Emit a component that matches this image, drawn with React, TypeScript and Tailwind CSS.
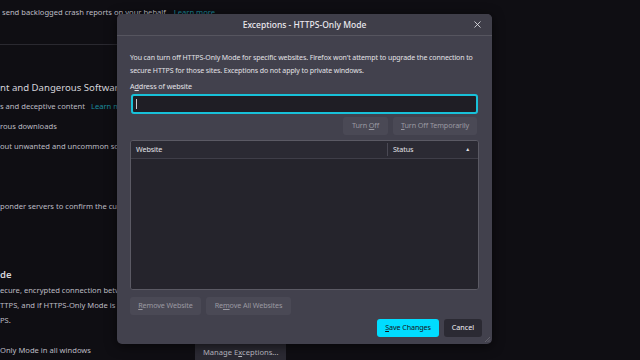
import { X } from "lucide-react";

const font = { fontFamily: '"Noto Sans", "Open Sans", sans-serif' };

function BackgroundPage() {
    return (
        <div className="w-[640px] h-[360px] bg-[#0f0e13] text-[#bdbcc3] text-[7.6px] overflow-hidden relative" style={font}>
            <div className="pt-[4px] pl-[2px] leading-[16px] whitespace-nowrap">
                send backlogged crash reports on your behalf. <span className="text-[#1b8a9c] ml-1">Learn more</span>
            </div>
            <div className="mt-[24px] border-t border-[#2a2930] w-[130px]" />
            {/* the rest of the page sits behind the dialog, so clip it at its left edge */}
            <div className="w-[117px] overflow-hidden">
                <div className="mt-[35px] text-[9.6px] leading-[16px] text-[#d4d3d9] whitespace-nowrap">nt and Dangerous Software</div>
                <div className="leading-[20px] whitespace-nowrap">
                    s and deceptive content <span className="text-[#1b8a9c] ml-1">Learn more</span>
                </div>
                <div className="leading-[20px] whitespace-nowrap">rous downloads</div>
                <div className="leading-[20px] whitespace-nowrap">out unwanted and uncommon software</div>
                <div className="mt-[40px] leading-[20px] whitespace-nowrap">ponder servers to confirm the current validity of certificates</div>
                <div className="mt-[51px] text-[9.5px] leading-[16px] font-semibold text-[#d4d3d9] whitespace-nowrap">de</div>
                <div className="whitespace-nowrap leading-[15px]">ecure, encrypted connection between Firefox and the websites</div>
                <div className="whitespace-nowrap leading-[15px]">TTPS, and if HTTPS-Only Mode is on</div>
                <div className="whitespace-nowrap leading-[15px]">PS.</div>
            </div>
            <div className="mt-[15px] flex items-start whitespace-nowrap">
                <span className="leading-[14px]">Only Mode in all windows</span>
                <span className="ml-[104px] px-[8px] h-[20px] flex items-center bg-[#2b2a33] text-[#bdbcc3]">
                    <span>Manage E<u>x</u>ceptions...</span>
                </span>
            </div>
        </div>
    );
}

function GhostButton({ children, className = "" }: { children: React.ReactNode; className?: string }) {
    return (
        <div className={`h-[18px] rounded-[3px] bg-[#4a4955] text-[#9a99a2] flex items-center justify-center whitespace-nowrap text-[7.2px] tracking-[-0.1px] ${className}`}>
            <span>{children}</span>
        </div>
    );
}

function ExceptionsDialog() {
    return (
        <div className="absolute left-[117px] top-[14px] w-[375px] h-[330px] rounded-[5px] bg-[#42414d] shadow-[0_2px_12px_rgba(0,0,0,0.6)] flex flex-col text-[#ebeaef]" style={font}>
            <div className="h-[22px] flex items-center justify-center relative border-b border-[#56555f] bg-[#3f3e49] rounded-t-[5px]">
                <span className="text-[8.5px] font-medium mt-[1px]">Exceptions - HTTPS-Only Mode</span>
                <X className="absolute right-[9px] top-[5px] w-[11px] h-[11px] text-[#e6e5ea]" strokeWidth={1.8} />
            </div>
            <div className="px-[13px] pt-[15px] flex flex-col flex-1">
                <p className="text-[7px] tracking-[-0.1px] leading-[13px] text-[#e2e1e7] whitespace-nowrap">
                    You can turn off HTTPS-Only Mode for specific websites. Firefox won't attempt to upgrade the connection to
                    <br />
                    secure HTTPS for those sites. Exceptions do not apply to private windows.
                </p>
                <div className="mt-[4px] text-[7.2px] tracking-[-0.1px] text-[#e2e1e7]">
                    A<u>d</u>dress of website
                </div>
                <div className="mt-[2px] mx-[1px] h-[20px] rounded-[3px] border-[2px] border-[#18c1d9] bg-[#1f1e25] flex items-center pl-[3px]">
                    <div className="w-[1px] h-[10px] bg-[#c8c7cd]" />
                </div>
                <div className="mt-[3px] flex justify-end gap-[5px] pr-[2px]">
                    <GhostButton className="w-[45px]">
                        Turn <u>O</u>ff
                    </GhostButton>
                    <GhostButton className="w-[84px]">
                        <u>T</u>urn Off Temporarily
                    </GhostButton>
                </div>
                <div className="mt-[5px] h-[150px] rounded-[3px] border border-[#5b5a64] bg-[#2b2a33] flex flex-col overflow-hidden">
                    <div className="h-[18px] flex items-center border-b border-[#3f3e48] bg-[#2b2a33] text-[7.2px] tracking-[-0.1px] text-[#e2e1e7]">
                        <div className="flex-1 pl-[5px]">Website</div>
                        <div className="w-[1px] h-[13px] bg-[#4a4954]" />
                        <div className="w-[90px] pl-[5px] pr-[8px] flex items-center justify-between">
                            <span>Status</span>
                            <span className="text-[5px]">▲</span>
                        </div>
                    </div>
                    <div className="flex-1 bg-[#25242c]" />
                </div>
                <div className="mt-[7px] flex gap-[5px]">
                    <GhostButton className="w-[71px]">
                        <u>R</u>emove Website
                    </GhostButton>
                    <GhostButton className="w-[85px]">
                        Re<u>m</u>ove All Websites
                    </GhostButton>
                </div>
                <div className="mt-[4px] flex justify-end gap-[5px] -mr-[3px]">
                    <div className="h-[18px] w-[62px] rounded-[3px] bg-[#00ddff] text-[#15141a] text-[7.2px] tracking-[-0.1px] flex items-center justify-center whitespace-nowrap">
                        <span><u>S</u>ave Changes</span>
                    </div>
                    <div className="h-[18px] w-[38px] rounded-[3px] bg-[#2b2a33] text-[#f0eff4] text-[7.2px] flex items-center justify-center">
                        Cancel
                    </div>
                </div>
            </div>
            <svg className="absolute right-[1px] bottom-[1px]" width="8" height="8" viewBox="0 0 8 8">
                <path d="M7 2 L2 7 M7 4.5 L4.5 7 M7 6.5 L6.5 7" stroke="#6b6a74" strokeWidth="0.8" />
            </svg>
        </div>
    );
}

export default function App() {
    return (
        <div className="relative w-[640px] h-[360px] overflow-hidden">
            <BackgroundPage />
            <ExceptionsDialog />
        </div>
    );
}
